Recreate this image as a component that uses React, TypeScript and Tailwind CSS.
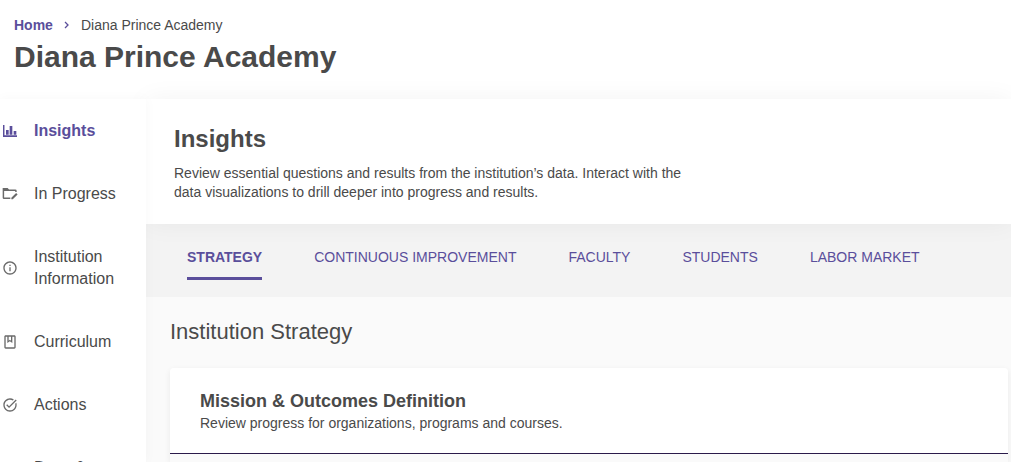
import type { ReactNode } from "react";

type NavItem = { label: string; icon: ReactNode; active?: boolean };

function Icon({ children }: { children: ReactNode }) {
  return (
    <svg viewBox="0 0 24 24" className="size-4 shrink-0" fill="currentColor" aria-hidden="true">
      {children}
    </svg>
  );
}

const navItems: NavItem[] = [
  {
    label: "Insights",
    active: true,
    icon: (
      <Icon>
        <path d="M1.500 3h2.200v15.500H22.500V21h-21zM6 10.500h4v7H6zM11.500 4.500h4v13h-4zM17.500 12h4v5.500h-4z" />
      </Icon>
    ),
  },
  {
    label: "In Progress",
    icon: (
      <Icon>
        <path d="M1 3h7.500l2 2.200H20q2 0 2 2V9h-2.200V7.600H3.200v9.800h9.300v2.200H3q-2 0-2-2zM14 17.600l7.200-7.200 2.200 2.200-7.200 7.200H14z" />
      </Icon>
    ),
  },
  {
    label: "Institution Information",
    icon: (
      <Icon>
        <path d="M11 7h2v2h-2zm0 4h2v6h-2zm1-9C6.480 2 2 6.480 2 12s4.480 10 10 10 10-4.480 10-10S17.520 2 12 2m0 18c-4.410 0-8-3.590-8-8s3.590-8 8-8 8 3.590 8 8-3.590 8-8 8" />
      </Icon>
    ),
  },
  {
    label: "Curriculum",
    icon: (
      <Icon>
        <path d="M18.500 2h-13c-1.100 0-2 .9-2 2v16c0 1.100.9 2 2 2h13c1.100 0 2-.9 2-2V4c0-1.100-.9-2-2-2M10 4h3.500v6l-1.750-1.300L10 10zm8.500 16h-13V4H8v9.500l3.750-2.600 3.750 2.600V4h3z" />
      </Icon>
    ),
  },
  {
    label: "Actions",
    icon: (
      <Icon>
        <path d="M22 5.180 10.590 16.600l-4.240-4.240 1.410-1.410 2.830 2.830 10-10zM12 20c-4.410 0-8-3.590-8-8s3.590-8 8-8c1.570 0 3.040.46 4.280 1.250l1.450-1.450A10 10 0 0 0 12 2C6.480 2 2 6.480 2 12s4.480 10 10 10 10-4.480 10-10c0-1.190-.22-2.330-.6-3.390l-1.600 1.600c.13.580.2 1.180.2 1.790 0 4.410-3.590 8-8 8" />
      </Icon>
    ),
  },
  {
    label: "Docs & Reports",
    icon: (
      <Icon>
        <path d="M6 2h8l6 6v12q0 2-2 2H6q-2 0-2-2V4q0-2 2-2m0 2v16h12V9h-5V4z" />
      </Icon>
    ),
  },
];

const tabs = ["Strategy", "Continuous Improvement", "Faculty", "Students", "Labor Market"];

export default function App() {
  return (
    <div className="flex h-screen flex-col overflow-hidden bg-white font-['Liberation_Sans',Arial,sans-serif] text-[#4a4a4a]">
      <header className="px-3.5 pt-[15px] pb-[22px]">
        <nav aria-label="Breadcrumb" className="flex items-center text-sm leading-5">
          <a href="#home" className="font-bold text-[#5a4e9b]">Home</a>
          <svg viewBox="0 0 8 8" className="mx-2.5 size-2" fill="none" stroke="#5a4e9b" strokeWidth="1.300" aria-hidden="true">
            <path d="M2 1l3 3-3 3" />
          </svg>
          <span>Diana Prince Academy</span>
        </nav>
        <h1 className="mt-0.5 text-3xl leading-10 font-bold">Diana Prince Academy</h1>
      </header>

      <div className="flex min-h-0 flex-1">
        <nav aria-label="Institution" className="relative z-10 w-[146px] shrink-0 bg-white pt-[21px] shadow-[0_0_12px_rgba(0,0,0,0.03)]">
          <ul className="flex flex-col gap-[41px]">
            {navItems.map((item) => (
              <li key={item.label}>
                <a
                  href={"#" + item.label}
                  aria-current={item.active ? "page" : undefined}
                  className={
                    item.active
                      ? "flex items-center gap-4 pr-4 pl-0.5 text-base leading-[22px] font-bold text-[#5a4e9b]"
                      : "flex items-center gap-4 pr-4 pl-0.5 text-base leading-[22px] text-[#6a6a6a]"
                  }
                >
                  {item.icon}
                  <span className={item.active ? "text-[#5a4e9b]" : "text-[#4a4a4a]"}>{item.label}</span>
                </a>
              </li>
            ))}
          </ul>
        </nav>

        <main className="flex min-w-0 flex-1 flex-col bg-[#fafafa]">
          <section className="relative bg-white px-7 pt-6 pb-[22px] shadow-[0_0_24px_rgba(0,0,0,0.05)]">
            <h2 className="text-2xl leading-8 font-bold">Insights</h2>
            <p className="mt-[9px] max-w-[530px] text-sm leading-[19px]">
              Review essential questions and results from the institution’s data. Interact with the data visualizations to drill deeper into progress and results.
            </p>
          </section>

          <div role="tablist" className="flex gap-[52px] bg-[#f3f3f3] px-[41px] pt-[23px] pb-[17px]">
            {tabs.map((tab, i) => (
              <button
                key={tab}
                type="button"
                role="tab"
                aria-selected={i === 0}
                className={
                  i === 0
                    ? "border-b-[3px] border-[#5a4e9b] pb-2.5 text-sm font-bold whitespace-nowrap text-[#5a4e9b] uppercase"
                    : "border-b-[3px] border-transparent pb-2.5 text-sm whitespace-nowrap text-[#5a4e9b] uppercase"
                }
              >
                {tab}
              </button>
            ))}
          </div>

          <section className="flex flex-1 flex-col pt-[19px] pr-[3px] pl-6">
            <h2 className="text-[22px] leading-8">Institution Strategy</h2>
            <article className="mt-5 flex-1 rounded-t bg-[#fafafa] shadow-[0_2px_6px_rgba(0,0,0,0.07)]">
              <header className="rounded-t bg-white px-[30px] pt-[21px] pb-5">
                <h3 className="text-lg leading-6 font-bold">Mission &amp; Outcomes Definition</h3>
                <p className="text-sm leading-5">Review progress for organizations, programs and courses.</p>
              </header>
              <hr className="border-t border-[#2b1b4b]" />
            </article>
          </section>
        </main>
      </div>
    </div>
  );
}
